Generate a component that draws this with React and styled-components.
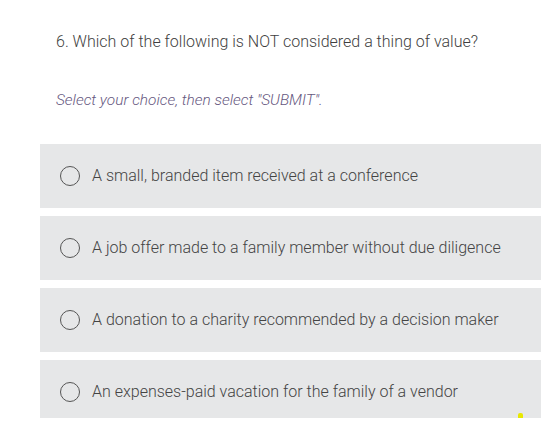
import React from "react";
import styled, { createGlobalStyle } from "styled-components";

const Global = createGlobalStyle`
  html, body { margin: 0; padding: 0; background: #fff; }
  body { font-family: Roboto, "Noto Sans", sans-serif; width: 541px; height: 428px; overflow: hidden; }
`;

const Page = styled.div`
  position: relative;
  padding: 29px 0 0 40px;
  height: 428px;
  box-sizing: border-box;
  overflow: hidden;
`;

const Question = styled.div`
  padding-left: 16px;
  font-size: 16px;
  font-weight: 300;
  color: #3f3f3f;
  line-height: 26px;
`;

const Hint = styled.div`
  padding-left: 16px;
  margin-top: 33px;
  font-size: 15.4px;
  font-weight: 300;
  font-style: italic;
  color: #665880;
  line-height: 24px;
`;

const Options = styled.div`
  margin-top: 32px;
  display: flex;
  flex-direction: column;
  gap: 8px;
`;

const Option = styled.div`
  height: ${p => p.$h || 64}px;
  background: #e6e7e8;
  display: flex;
  align-items: ${p => (p.$h ? "flex-start" : "center")};
  padding-top: ${p => (p.$h ? "22px" : "0")};
  box-sizing: border-box;
  padding-left: 20px;
  gap: 12px;
`;

const Radio = styled.span`
  width: 18px;
  height: 18px;
  border: 1.3px solid #555;
  border-radius: 50%;
  flex: none;
`;

const Label = styled.span`
  font-size: 16px;
  font-weight: 300;
  color: #444;
  line-height: 20px;
`;

const Mark = styled.div`
  position: absolute;
  left: 518px;
  top: 413px;
  width: 5px;
  height: 5px;
  background: #e8e800;
  border-radius: 2px 2px 0 0;
`;

const options = [
  "A small, branded item received at a conference",
  "A job offer made to a family member without due diligence",
  "A donation to a charity recommended by a decision maker",
  "An expenses-paid vacation for the family of a vendor",
];

export default function App() {
  return (
    <>
      <Global />
      <Page>
        <Question>6. Which of the following is NOT considered a thing of value?</Question>
        <Hint>Select your choice, then select "SUBMIT".</Hint>
        <Options>
          {options.map((o, i) => (
            <Option key={i} $h={i === 3 ? 58 : undefined}>
              <Radio />
              <Label>{o}</Label>
            </Option>
          ))}
        </Options>
        <Mark />
      </Page>
    </>
  );
}
